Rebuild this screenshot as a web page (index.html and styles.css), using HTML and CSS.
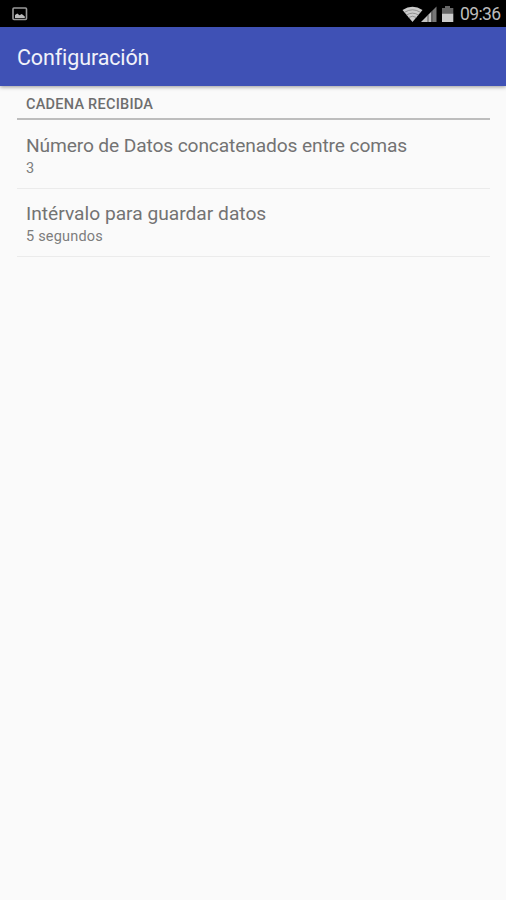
FILE: index.html
```html
<!DOCTYPE html>
<html lang="es">
<head>
<meta charset="utf-8">
<title>Configuración</title>
<link rel="stylesheet" href="styles.css">
</head>
<body>
<div class="status">
  <svg class="picture" width="16" height="14" viewBox="0 0 16 14"><rect x="1" y="1" width="13.5" height="11.5" rx="1" fill="none" stroke="#999" stroke-width="1.6"/><path d="M3 11V8L5.3 6.500l2.200 1.700L9.800 7 12.800 9.500V11z" fill="#bbb"/></svg>
  <div class="indicators">
    <svg width="52" height="18" viewBox="0 0 52 18">
      <path d="M.5 5Q10.500 -1.500 20.500 5L10.500 17z" fill="#ccc"/>
      <path d="M2.500 7.300Q10.500 2.300 18.500 7.300M4.500 10Q10.500 6.300 16.500 10M6.500 12.500Q10.500 10 14.500 12.500" fill="none" stroke="#777" stroke-width=".7"/>
      <path d="M19 17L29 7V17z" fill="#c4c4c4"/>
      <path d="M29 7L34.500 1.500V17H29z" fill="#777"/>
      <path d="M26 10V17M30 6V17" stroke="#444" stroke-width=".8"/>
      <path d="M43 1h5v2h3.300v5.500H40V3h3z" fill="#666"/>
      <path d="M40 8.500h11.300V17H40z" fill="#ccc"/>
    </svg>
    <span class="clock">09:36</span>
  </div>
</div>
<header class="appbar"><h1>Configuración</h1></header>
<main class="prefs">
  <h2>CADENA RECIBIDA</h2>
  <section class="pref">
    <div class="title title-count">Número de Datos concatenados entre comas</div>
    <div class="summary">3</div>
  </section>
  <section class="pref">
    <div class="title title-interval">Intérvalo para guardar datos</div>
    <div class="summary">5 segundos</div>
  </section>
</main>
</body>
</html>
```
FILE: styles.css
```css
* { box-sizing: border-box; }
body { margin: 0; height: 900px; overflow: hidden; background: #fafafa; font-family: Roboto, sans-serif; }
.status { height: 27px; background: #000; display: flex; justify-content: space-between; align-items: center; padding: 0 5px 0 12px; }
.picture { display: block; }
.indicators { display: flex; align-items: center; gap: 6px; }
.indicators svg { display: block; }
.clock { width: 41px; font-size: 17.500px; line-height: 27px; padding-top: 1px; letter-spacing: -.6px; color: #bcbcbc; white-space: nowrap; }
.appbar { height: 59px; background: #3f51b5; padding: 0 17px; display: flex; align-items: center; box-shadow: 0 1px 4px rgba(0,0,0,.4); }
h1 { margin: 2px 0 0; font-size: 21.500px; letter-spacing: -.12px; font-weight: 400; line-height: 28px; color: #f1f2fa; }
.prefs { padding: 0 16px 0 17px; }
h2 { margin: 0; height: 34px; padding: 9px 9px 0; font-size: 14.500px; line-height: 20px; letter-spacing: .25px; font-weight: 500; color: #6e6e6e; border-bottom: 2px solid #bdbdbd; }
.pref { height: 68px; padding: 12px 9px 0; border-bottom: 1px solid #ebebeb; }
.pref:first-of-type { height: 69px; padding-top: 13px; }
.title { font-size: 19.200px; line-height: 25px; color: #737373; white-space: nowrap; }
.title-count { letter-spacing: -.13px; }
.summary { padding-top: 1px; font-size: 14.500px; line-height: 20px; letter-spacing: .2px; color: #7d7d7d; }
```
